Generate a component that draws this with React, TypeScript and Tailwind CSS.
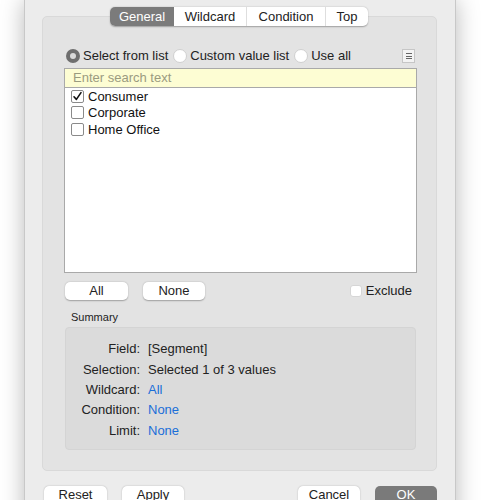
import React from "react";

const font = { fontFamily: '"Liberation Sans", Arial, sans-serif' };

function Check({ checked }: { checked?: boolean }) {
  return (
    <div className="w-[13px] h-[13px] rounded-[2px] border border-[#8a8a8a] bg-white flex items-center justify-center shrink-0">
      {checked && (
        <svg width="11" height="11" viewBox="0 0 11 11">
          <path d="M2 5.8 L4.4 8.4 L9 1.6" fill="none" stroke="#111" strokeWidth="1.6" strokeLinecap="round" strokeLinejoin="round" />
        </svg>
      )}
    </div>
  );
}

function Radio({ selected }: { selected?: boolean }) {
  return selected ? (
    <div className="w-[14px] h-[14px] rounded-full bg-[#6e6e6e] flex items-center justify-center shrink-0">
      <div className="w-[6px] h-[6px] rounded-full bg-[#d9d9d9]" />
    </div>
  ) : (
    <div className="w-[14px] h-[14px] rounded-full bg-white border border-[#d0d0d0] shrink-0" />
  );
}

function Btn({ label, w, dark }: { label: string; w: string; dark?: boolean }) {
  return (
    <div
      className={`${w} h-[18px] rounded-[5px] flex items-center justify-center text-[13px] ${
        dark ? "bg-[#7a7a7a] text-white" : "bg-white text-[#222] shadow-[0_0.5px_1.5px_rgba(0,0,0,0.3)]"
      }`}
    >
      {label}
    </div>
  );
}

export default function App() {
  const rows: [string, string, boolean][] = [
    ["Field:", "[Segment]", false],
    ["Selection:", "Selected 1 of 3 values", false],
    ["Wildcard:", "All", true],
    ["Condition:", "None", true],
    ["Limit:", "None", true],
  ];
  return (
    <div className="w-[500px] h-[500px] bg-white overflow-hidden pl-[24px]" style={font}>
      <div className="w-[432px] h-[540px] bg-[#ececec] border-x border-[#c8c8c8] shadow-[0_0_22px_rgba(0,0,0,0.28)] pl-[17px] pt-[16px]">
        {/* group box */}
        <div className="w-[395px] h-[455px] bg-[#e3e3e3] border border-[#d9d9d9] rounded-[5px] flex flex-col">
          {/* tabs */}
          <div className="-mt-[10px] self-center ml-[-1px] flex h-[19px] rounded-[5px] bg-white shadow-[0_0.5px_1.5px_rgba(0,0,0,0.3)] text-[13px] text-[#222] overflow-hidden">
            <div className="w-[64px] flex items-center justify-center bg-[#7b7b7b] text-white">General</div>
            <div className="w-[73px] flex items-center justify-center border-r border-[#dedede]">Wildcard</div>
            <div className="w-[79px] flex items-center justify-center border-r border-[#dedede]">Condition</div>
            <div className="w-[42px] flex items-center justify-center">Top</div>
          </div>

          {/* radio row */}
          <div className="mt-[22px] h-[16px] flex items-center pl-[23px] pr-[21px] text-[13px] text-[#222]">
            <Radio selected />
            <span className="ml-[3px]">Select from list</span>
            <div className="ml-[5px]"><Radio /></div>
            <span className="ml-[3px]">Custom value list</span>
            <div className="ml-[5px]"><Radio /></div>
            <span className="ml-[3px]">Use all</span>
            <div className="ml-auto w-[13px] h-[14px] border border-[#c6c6c6] bg-[#f3f3f3] flex flex-col items-center justify-center gap-[1.5px]">
              <div className="w-[6px] h-[1px] bg-[#666]" />
              <div className="w-[6px] h-[1px] bg-[#666]" />
              <div className="w-[6px] h-[1px] bg-[#666]" />
            </div>
          </div>

          {/* list */}
          <div className="mt-[4px] ml-[21px] w-[353px] h-[205px] border border-[#a9a9a9] bg-white flex flex-col">
            <div className="h-[19px] bg-[#fdfdd3] border-b border-[#a9a9a9] flex items-center pl-[8px] text-[13px] text-[#9b9b80]">
              Enter search text
            </div>
            <div className="flex flex-col text-[13px] text-[#111]">
              {[
                ["Consumer", true],
                ["Corporate", false],
                ["Home Office", false],
              ].map(([t, c]) => (
                <div key={t as string} className="h-[16.5px] flex items-center pl-[6px] gap-[4px]">
                  <Check checked={c as boolean} />
                  <span>{t as string}</span>
                </div>
              ))}
            </div>
          </div>

          {/* buttons row */}
          <div className="mt-[8px] ml-[22px] w-[352px] flex items-center">
            <Btn label="All" w="w-[63px]" />
            <div className="ml-[15px]"><Btn label="None" w="w-[62px]" /></div>
            <div className="ml-auto mr-[5px] flex items-center gap-[4px] text-[13px] text-[#222]">
              <div className="w-[12px] h-[12px] rounded-[3px] bg-white border border-[#d6d6d6]" />
              <span>Exclude</span>
            </div>
          </div>

          <div className="mt-[8px] ml-[28px] text-[11px] text-[#222]">Summary</div>

          {/* summary box */}
          <div className="mt-[2px] ml-[22px] w-[351px] h-[123px] bg-[#dbdbdb] border border-[#d4d4d4] rounded-[4px] pt-[11px] text-[13px]">
            {rows.map(([l, v, link]) => (
              <div key={l} className="h-[20.3px] flex items-center">
                <div className="w-[74px] text-right text-[#222]">{l}</div>
                <div className={`ml-[8px] ${link ? "text-[#1a6ed8]" : "text-[#222]"}`}>{v}</div>
              </div>
            ))}
          </div>
        </div>

        {/* bottom buttons */}
        <div className="mt-[15px] ml-[2px] w-[393px] flex">
          <Btn label="Reset" w="w-[63px]" />
          <div className="ml-[15px]"><Btn label="Apply" w="w-[62px]" /></div>
          <div className="ml-auto"><Btn label="Cancel" w="w-[62px]" /></div>
          <div className="ml-[15px]"><Btn label="OK" w="w-[62px]" dark /></div>
        </div>
      </div>
    </div>
  );
}
